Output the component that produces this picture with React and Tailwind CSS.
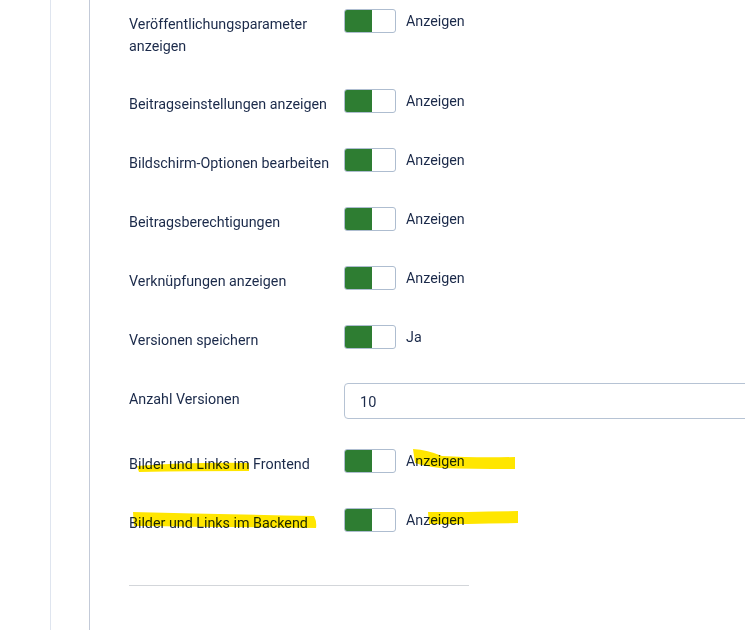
import React from "react";

function Toggle() {
  return (
    <div className="flex h-[24px] w-[52px] shrink-0 overflow-hidden rounded-[3px] border border-[#aebdd0] bg-white">
      <div className="h-full w-[27px] bg-[#2e7d32]" />
    </div>
  );
}

function Row({ label, h, value, input }) {
  return (
    <div className="flex items-start" style={{ height: h }}>
      <div className={(input ? "pt-[5px] " : "pt-[4px] ") + "w-[215px] shrink-0 text-[14.3px] leading-[22px] text-[#1b2a4a]"}>
        {label}
      </div>
      {input ? (
        <div className="flex h-[36px] w-[460px] shrink-0 items-center rounded-[4px] border border-[#b6c3d4] pl-[15px] pt-[3px] text-[14.5px] text-[#1b2a4a]">
          10
        </div>
      ) : (
        <div className="flex items-center">
          <Toggle />
          <span className="ml-[10px] -mt-[1px] text-[14.3px] leading-[22px] text-[#1b2a4a]">{value}</span>
        </div>
      )}
    </div>
  );
}

export default function App() {
  return (
    <div
      className="relative flex h-[630px] w-[745px] overflow-hidden bg-white"
      style={{ fontFamily: "Roboto, 'Noto Sans', sans-serif" }}
    >
      <div className="w-[50px] shrink-0" />
      <div className="w-px shrink-0 bg-[#dfe5ef]" />
      <div className="w-[38px] shrink-0" />
      <div className="w-px shrink-0 bg-[#c3cad8]" />
      <div className="min-w-0 flex-1 pl-[39px] pt-[9px]">
        <Row h={80} label={<>Veröffentlichungsparameter<br />anzeigen</>} value="Anzeigen" />
        <Row h={59} label="Beitragseinstellungen anzeigen" value="Anzeigen" />
        <Row h={59} label="Bildschirm-Optionen bearbeiten" value="Anzeigen" />
        <Row h={59} label="Beitragsberechtigungen" value="Anzeigen" />
        <Row h={59} label="Verknüpfungen anzeigen" value="Anzeigen" />
        <Row h={58} label="Versionen speichern" value="Ja" />
        <Row h={66} label="Anzahl Versionen" input />
        <Row h={59} label="Bilder und Links im Frontend" value="Anzeigen" />
        <Row h={59} label="Bilder und Links im Backend" value="Anzeigen" />
        <div className="mt-[18px] h-px w-[340px] bg-[#d3d6da]" />
      </div>
      <svg
        className="pointer-events-none absolute left-0 top-0 mix-blend-multiply"
        width="745"
        height="630"
        viewBox="0 0 745 630"
      >
        <g fill="#ffe600">
          <path d="M137 466 Q190 462 249 463 L249 471 Q190 471 139 472 Z" />
          <path d="M133 512 Q220 514 314 516 Q317 522 316 528 Q220 527 134 526 Z" />
          <path d="M413 449 Q428 450 442 456 Q475 458 515 457 L515 469 Q475 469 440 468 Q424 466 415 463 Z" />
          <path d="M428 512 Q470 512 518 511 L518 523 Q470 524 429 524 Z" />
        </g>
      </svg>
    </div>
  );
}
